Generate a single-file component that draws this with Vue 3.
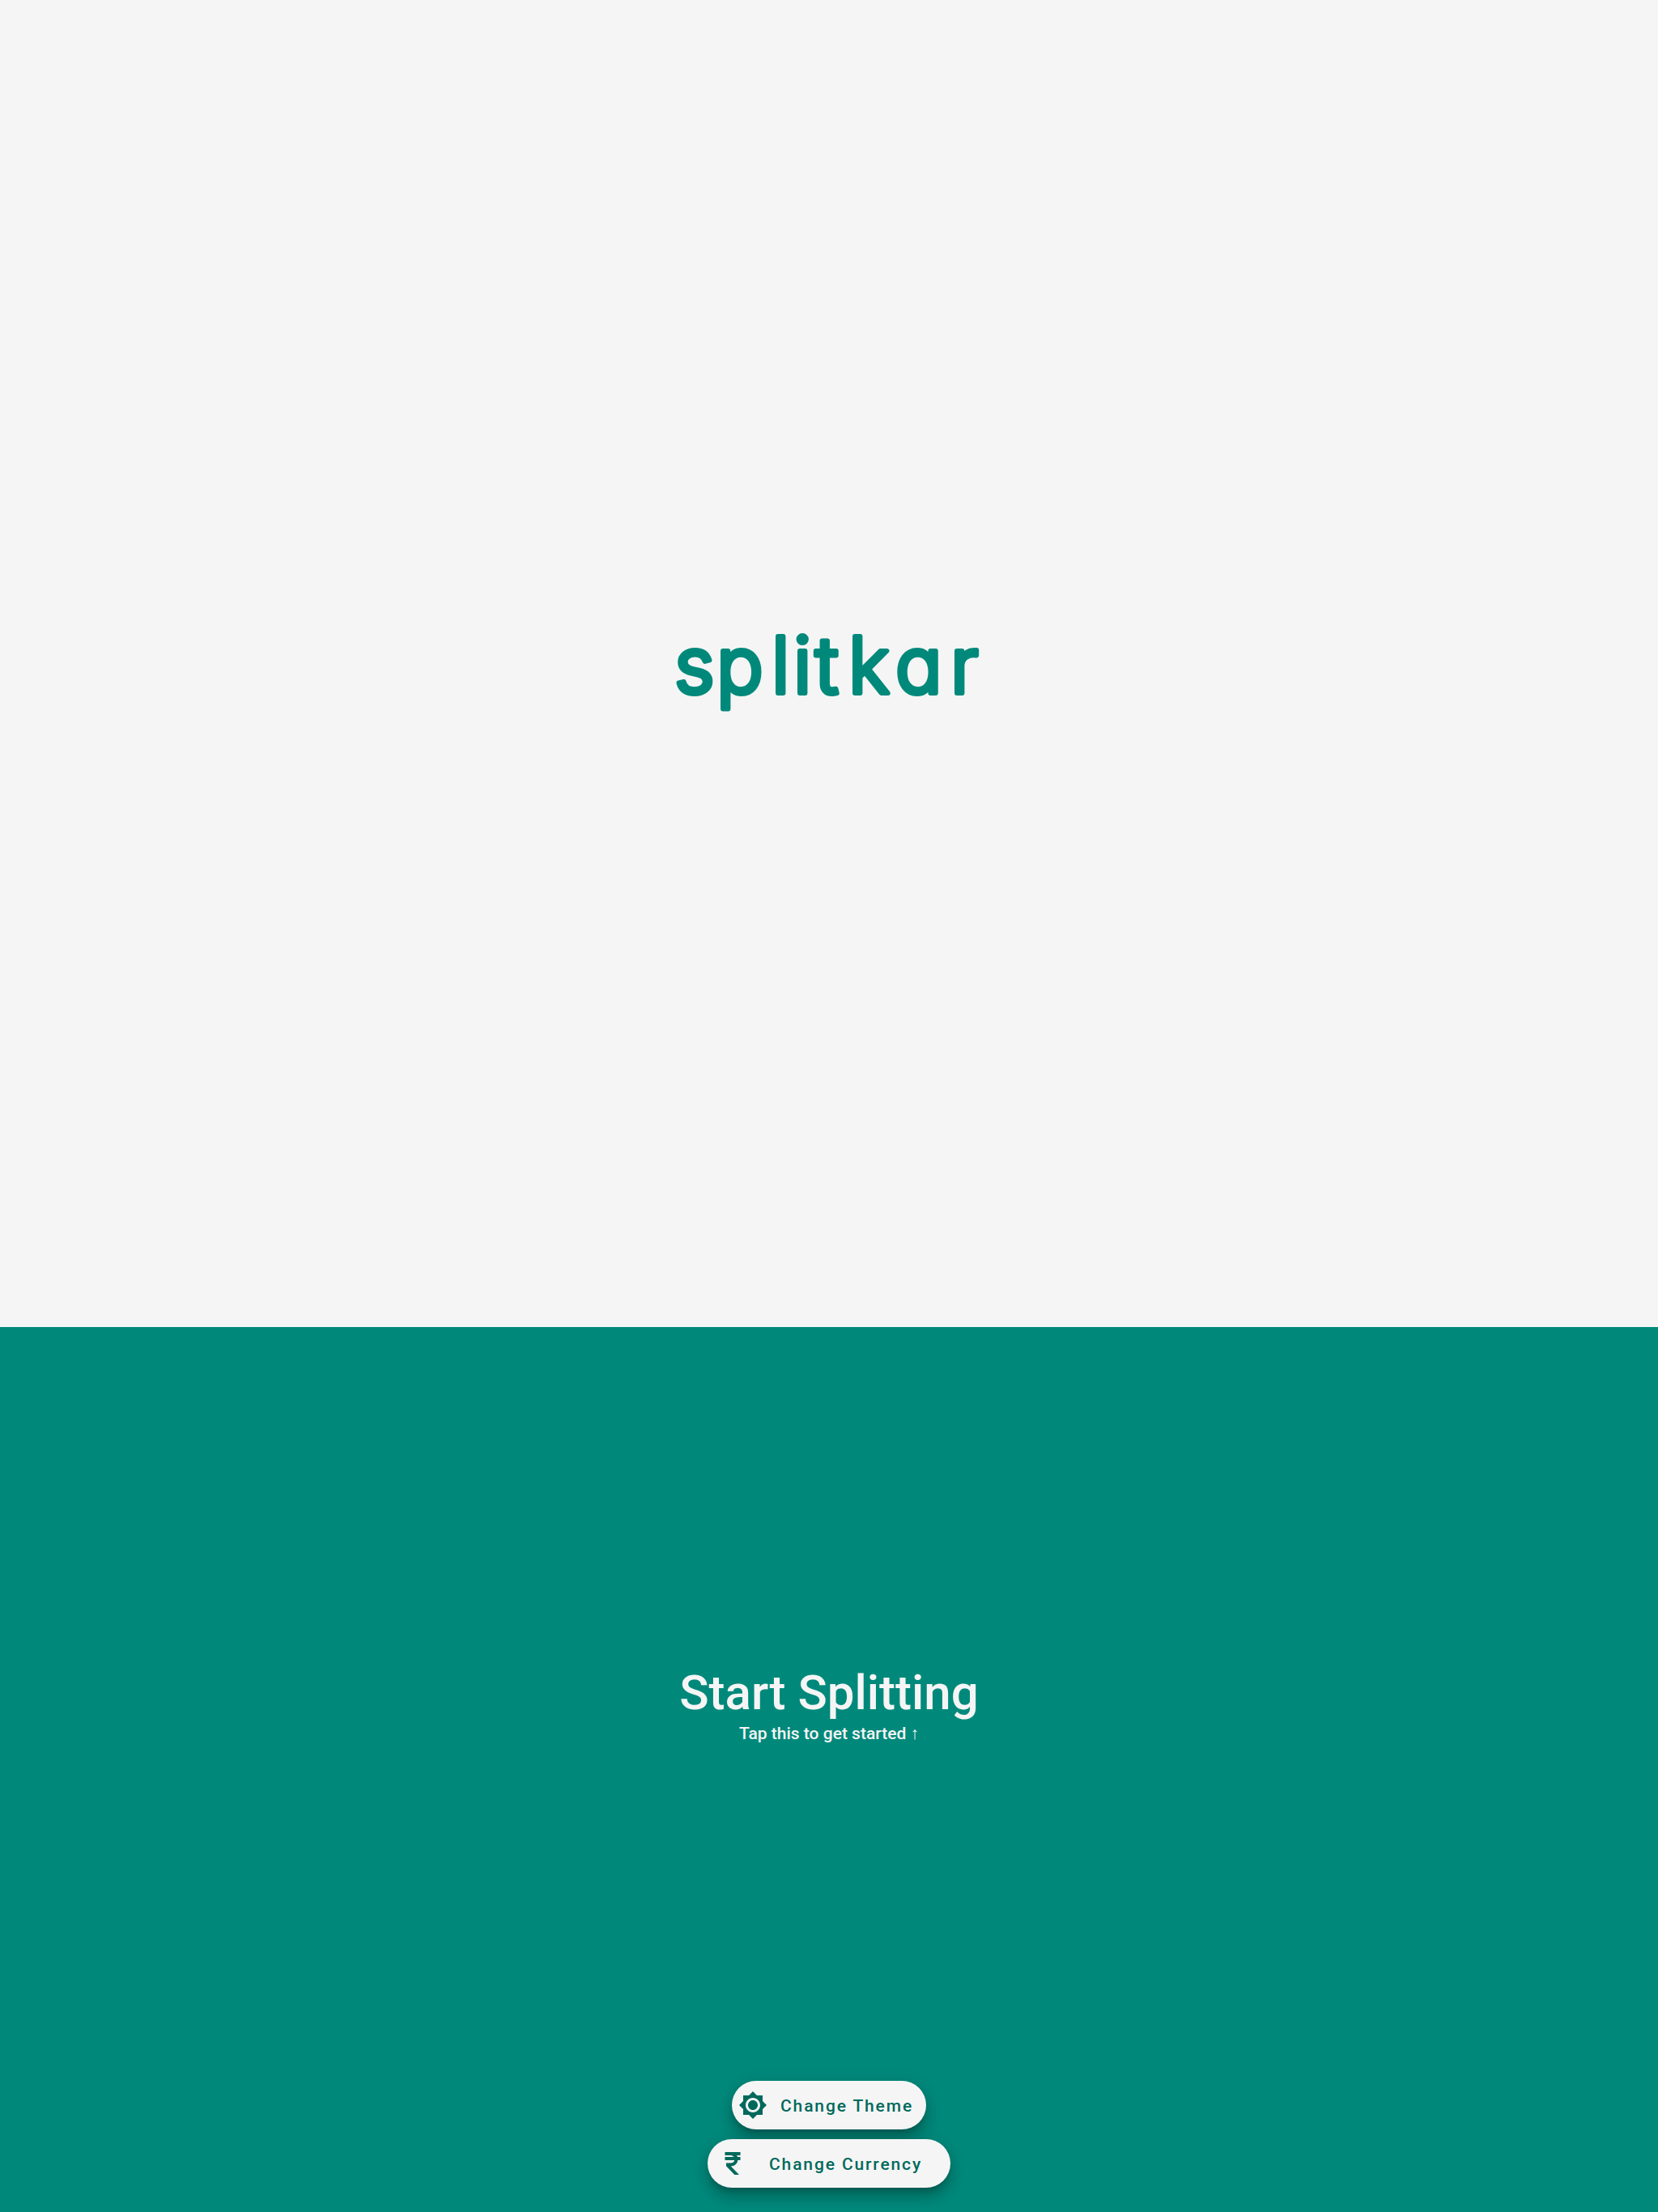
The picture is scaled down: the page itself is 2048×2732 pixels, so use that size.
<script setup>
const actions = [
  { label: 'Change Theme', cls: 'theme', d: 'M20 8.69V4h-4.69L12 .69 8.69 4H4v4.69L.69 12 4 15.31V20h4.69L12 23.31 15.31 20H20v-4.69L23.31 12 20 8.69zM12 18c-3.31 0-6-2.69-6-6s2.69-6 6-6 6 2.69 6 6-2.69 6-6 6zm0-10c-2.21 0-4 1.79-4 4s1.79 4 4 4 4-1.79 4-4-1.79-4-4-4z' },
  { label: 'Change Currency', cls: 'currency', d: 'M13.66 7C13.1 5.82 11.9 5 10.5 5H6V3h12v2h-3.26c.48.58.84 1.26 1.05 2H18v2h-2.02c-.25 2.8-2.61 5-5.48 5h-.73l6.73 7h-2.77L7 14v-2h3.5c1.76 0 3.22-1.3 3.46-3H6V7h7.66z' }
]
</script>

<template>
  <div class="page">
    <section class="top">
      <svg class="logo" width="392" height="110" viewBox="0 0 392 110">
        <text x="5 57 125 152 179 220 278 346" y="81" class="logo-text">splitkar</text>
      </svg>
    </section>
    <section class="bottom">
      <div class="center">
        <h1 class="title">Start Splitting</h1>
        <p class="sub">Tap this to get started ↑</p>
      </div>
      <div class="actions">
        <button v-for="a in actions" :key="a.label" class="pill" :class="a.cls">
          <svg class="icon" width="36" height="36" viewBox="0 0 24 24"><path :d="a.d" class="icon-path" /></svg>
          <span class="label">{{ a.label }}</span>
        </button>
      </div>
    </section>
  </div>
</template>

<style>
html, body { margin: 0; background: #00897b; }
</style>

<style scoped>
.page {
  width: 2048px;
  height: 2732px;
  display: flex;
  flex-direction: column;
  font-family: Roboto, "Liberation Sans", sans-serif;
}
.top {
  height: 1639px;
  background: #f5f5f5;
  display: flex;
  align-items: center;
  justify-content: center;
  padding-top: 21px;
  box-sizing: border-box;
}
.logo { display: block; overflow: visible; }
.logo-text {
  font-family: Inter, Lato, sans-serif;
  font-feature-settings: "cv11" 1;
  font-size: 96px;
  font-weight: 300;
  fill: #00897b;
  stroke: #00897b;
  stroke-width: 6px;
  stroke-linejoin: round;
}
.bottom {
  flex: 1;
  background: #00897b;
  display: flex;
  flex-direction: column;
  align-items: center;
  padding-bottom: 30px;
}
.center {
  flex: 1;
  display: flex;
  flex-direction: column;
  align-items: center;
  justify-content: center;
  padding-top: 2px;
}
.title {
  margin: 0;
  font-size: 60px;
  line-height: 70px;
  font-weight: 500;
  color: #f5f5f5;
}
.sub {
  margin: 0;
  font-size: 21px;
  line-height: 30px;
  font-weight: 500;
  color: #f5f5f5;
}
.actions {
  display: flex;
  flex-direction: column;
  align-items: center;
  gap: 12px;
}
.pill {
  height: 60px;
  border: 0;
  border-radius: 30px;
  background: #f5f5f5;
  display: flex;
  align-items: center;
  box-sizing: border-box;
  box-shadow: 0 7.5px 7.5px -4.5px rgba(0, 0, 0, 0.2), 0 12px 15px 1.5px rgba(0, 0, 0, 0.14), 0 4.5px 21px 3px rgba(0, 0, 0, 0.12);
  font-family: inherit;
}
.theme { width: 240px; padding: 0 0 0 8px; gap: 16px; }
.currency { width: 300px; padding: 0 0 0 13px; gap: 27px; }
.icon { flex: none; }
.icon-path { fill: #00695c; }
.currency .icon-path { stroke: #00695c; stroke-width: 0.7px; }
.label {
  padding-top: 2px;
  font-size: 21px;
  font-weight: 500;
  letter-spacing: 1.875px;
  color: #00695c;
  white-space: nowrap;
}
</style>
